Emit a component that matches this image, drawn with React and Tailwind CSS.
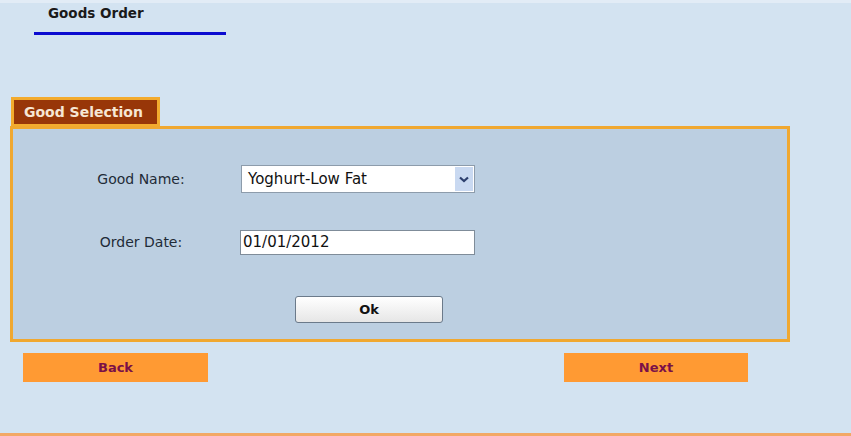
export default function App() {
  return (
    <div
      className="w-[851px] h-[436px] bg-[#d3e3f1] flex flex-col border-t-[3px] border-[#e2ecf6] overflow-hidden"
      style={{ fontFamily: '"DejaVu Sans", Verdana, sans-serif' }}
    >
      {/* page heading */}
      <div className="ml-[34px] w-[192px] border-b-[3px] border-[#0b0bd0] pt-[1px] pb-[10px] pl-[14px] leading-[17px]">
        <span className="text-[13.5px] leading-[17px] font-bold text-[#1a1a1a]">Goods Order</span>
      </div>

      {/* tab label */}
      <div className="mt-[62px] ml-[11px] w-[149px] h-[29px] border-[3px] border-b-2 border-[#f3ab2e] bg-[#983608] pl-[10px] flex items-center">
        <span className="text-[14px] font-bold text-[#f6e6d4] leading-none">Good Selection</span>
      </div>

      {/* selection panel */}
      <div className="ml-[10px] w-[780px] h-[216px] border-[3px] border-[#f0a830] bg-[#bccfe1] pt-[36px]">
        <div className="flex items-center h-[28px]">
          <div className="ml-[47px] w-[162px] text-center text-[14px] text-[#1f2b37]">Good Name:</div>
          <div className="ml-[19px] w-[234px] h-[28px] border border-[#8d9cab] bg-white flex items-center pl-[6px] pr-[1px]">
            <span className="flex-1 text-[15px] text-[#111]">Yoghurt-Low Fat</span>
            <div className="w-[18px] h-[24px] bg-[#c9d9f1] flex items-center justify-center">
              <svg width="10" height="7" viewBox="0 0 10 7">
                <path d="M1 1.5 L5 5 L9 1.5" fill="none" stroke="#2d3f6e" strokeWidth="2.2" />
              </svg>
            </div>
          </div>
        </div>

        <div className="flex items-center h-[25px] mt-[37px]">
          <div className="ml-[47px] w-[162px] text-center text-[14px] text-[#1f2b37]">Order Date:</div>
          <div className="ml-[18px] w-[235px] h-[25px] border border-[#7f8c99] bg-white flex items-center pl-[2px]">
            <span className="text-[15px] text-[#111]">01/01/2012</span>
          </div>
        </div>

        <button className="mt-[41px] ml-[282px] w-[148px] h-[27px] rounded-[3px] border border-[#6b7a8a] bg-gradient-to-b from-white to-[#e6e6e6] flex items-center justify-center">
          <span className="text-[13px] font-bold text-[#111]">Ok</span>
        </button>
      </div>

      {/* navigation */}
      <div className="flex mt-[11px]">
        <button className="ml-[23px] w-[185px] h-[29px] bg-[#ff9a33] flex items-center justify-center">
          <span className="text-[13px] font-bold text-[#7a1048]">Back</span>
        </button>
        <button className="ml-[356px] w-[184px] h-[29px] bg-[#ff9a33] flex items-center justify-center">
          <span className="text-[13px] font-bold text-[#7a1048]">Next</span>
        </button>
      </div>

      <div className="mt-auto h-[3px] bg-[#f2a866]" />
    </div>
  );
}
